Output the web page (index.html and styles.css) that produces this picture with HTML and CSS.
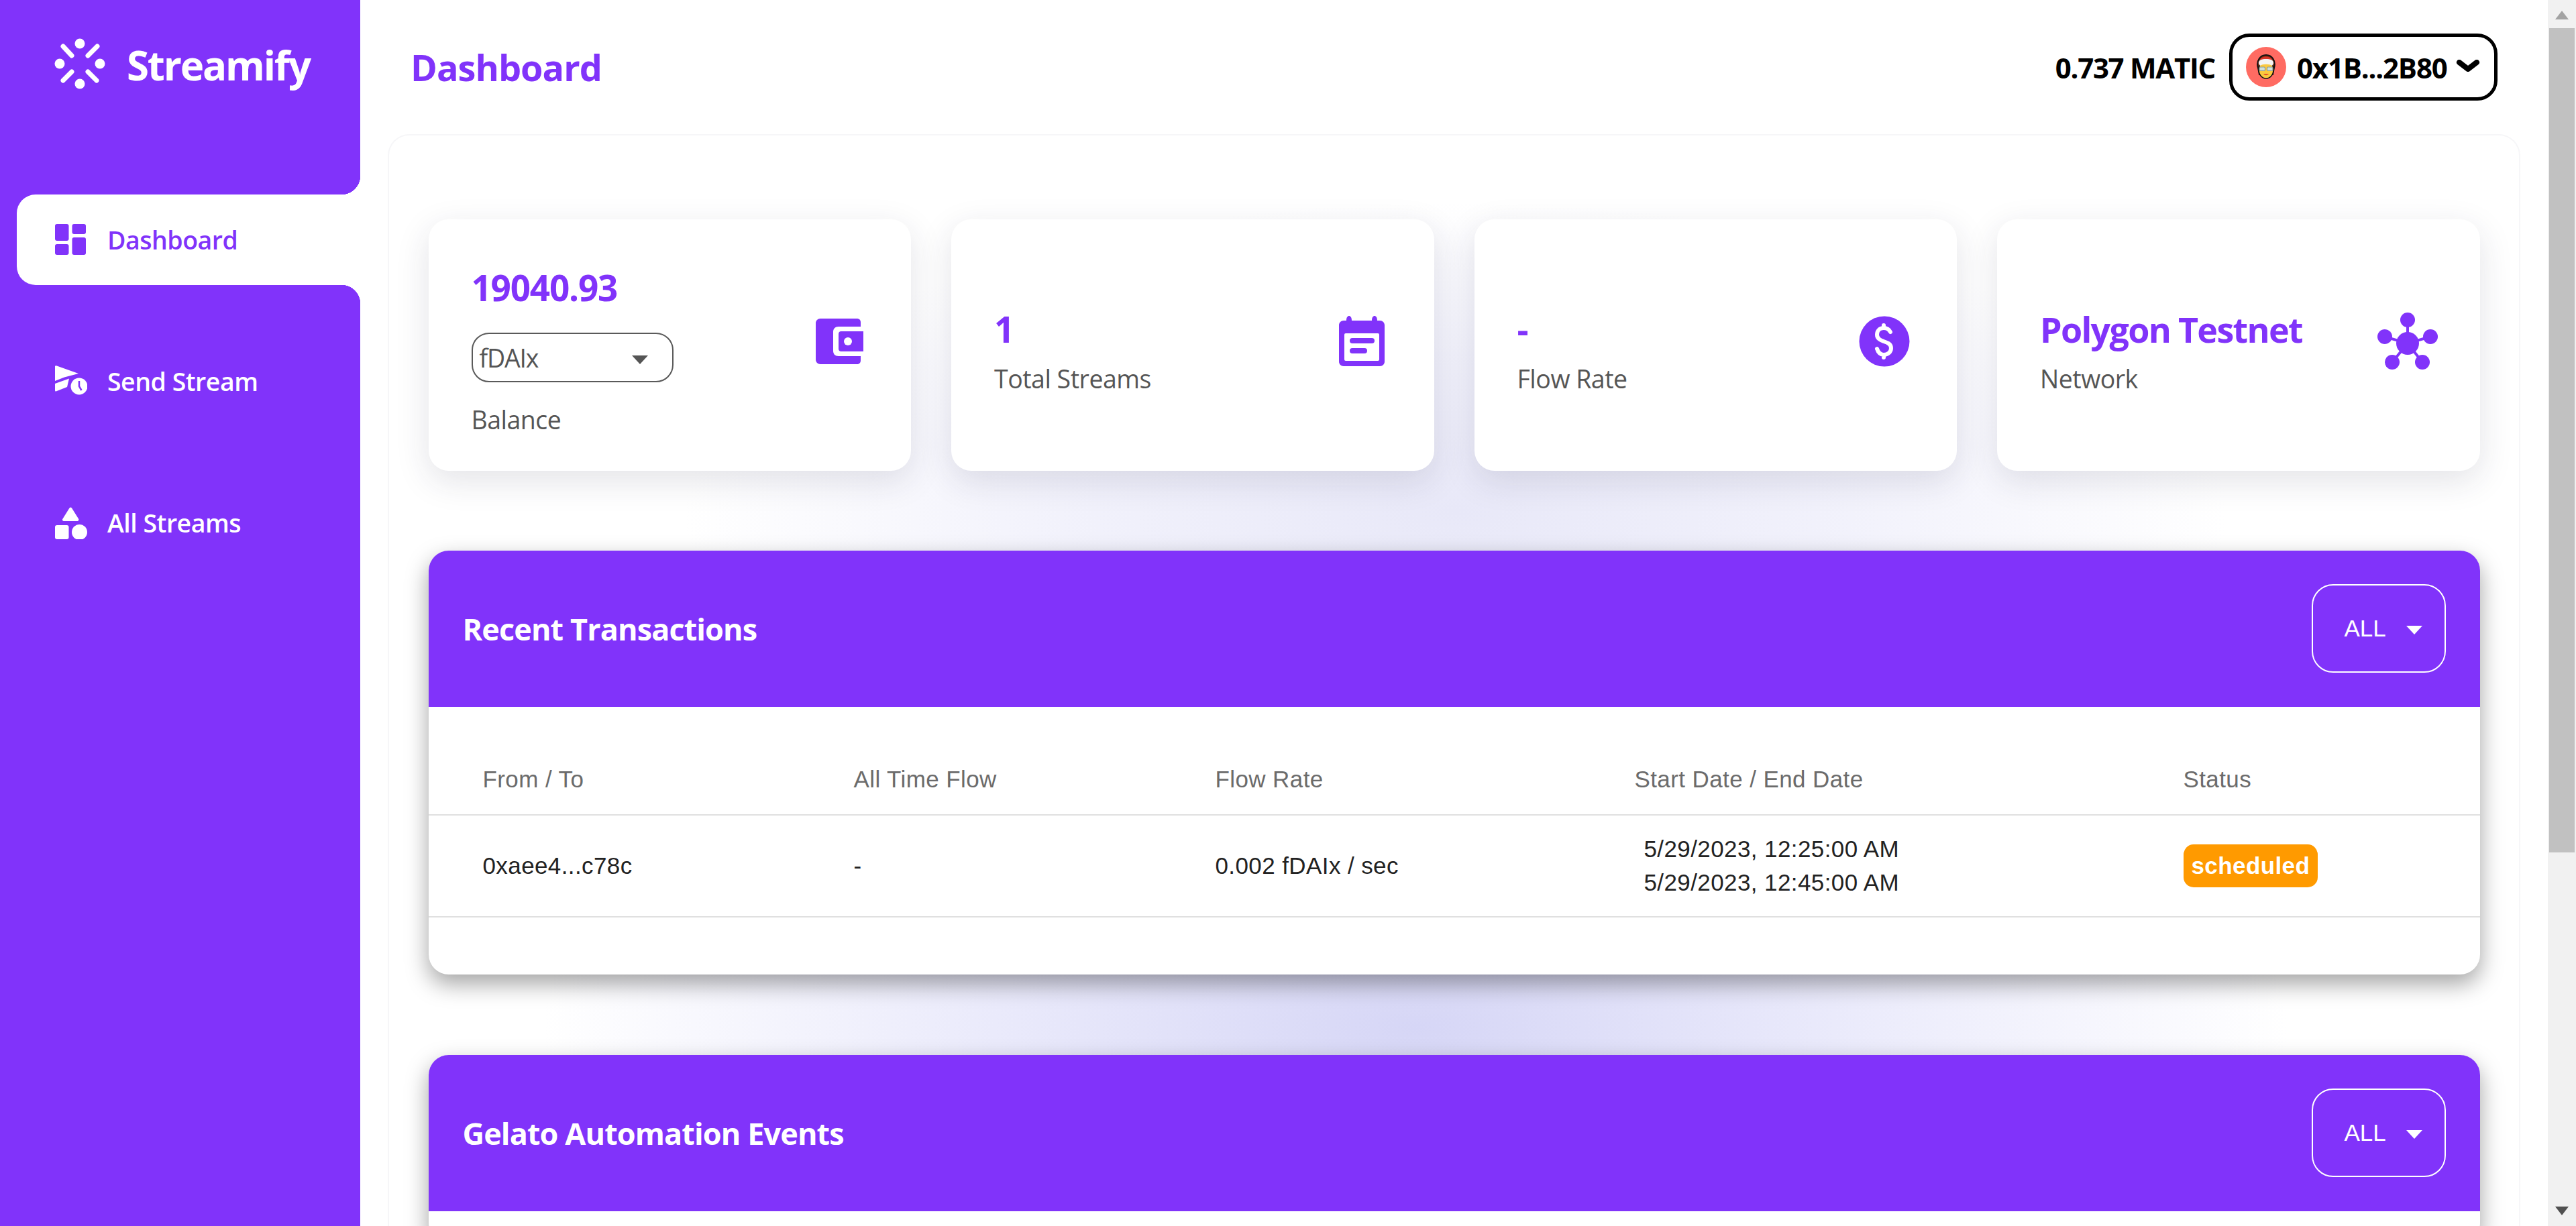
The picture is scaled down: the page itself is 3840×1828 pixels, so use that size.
FILE: index.html
```html
<!doctype html>
<html lang="en">
<head>
    <meta charset="UTF-8">
    <title>Streamify</title>
    <link rel="stylesheet" href="styles.css">
</head>
<body>

<aside class="sidebar">
    <div class="brand">
        <svg class="brand-icon" viewBox="0 0 76 76" fill="#fff" stroke="#fff">
            <circle cx="38" cy="8" r="7.5" stroke="none"/>
            <circle cx="8" cy="38" r="7.5" stroke="none"/>
            <circle cx="68" cy="38" r="7.5" stroke="none"/>
            <circle cx="38" cy="68" r="7.5" stroke="none"/>
            <path d="M13 12 26 26M64 12 50 26M13 63 26 50M63 63 50 50" stroke-width="7" stroke-linecap="round"/>
        </svg>
        <span class="brand-name">Streamify</span>
    </div>

    <nav class="nav">
        <a class="nav-item active">
            <svg class="nav-icon" viewBox="0 0 48 48" fill="currentColor">
                <rect x="0" y="0" width="20.5" height="25" rx="3"/>
                <rect x="25.5" y="0" width="20.5" height="15" rx="3"/>
                <rect x="0" y="30" width="20.5" height="16" rx="3"/>
                <rect x="25.5" y="20" width="20.5" height="26" rx="3"/>
            </svg>
            <span>Dashboard</span>
        </a>
        <a class="nav-item">
            <svg class="nav-icon" viewBox="0 0 48 48" fill="currentColor">
                <path d="M0 1.500C0 .500 1 0 2 .300L35 12 14 17.500 0 23Z"/>
                <path d="M0 27 21 19.500 18 32 1.500 38.500C.500 38.800 0 38 0 37Z"/>
                <circle cx="36" cy="31" r="12.500"/>
                <path d="M36 23 36 31 39.500 37" fill="none" stroke="#8133fa" stroke-width="2.500"/>
            </svg>
            <span>Send Stream</span>
        </a>
        <a class="nav-item">
            <svg class="nav-icon" viewBox="0 0 48 48" fill="currentColor">
                <path d="M21.500 1.500C22.500 0 24 0 25 1.500L35 17.500C36 19 35 21 33.500 21H13C11 21 10.500 19 11.500 17.500Z"/>
                <rect x="0" y="27" width="20.500" height="21" rx="3"/>
                <circle cx="36.500" cy="37.500" r="11.500"/>
            </svg>
            <span>All Streams</span>
        </a>
    </nav>
</aside>

<main class="main">
    <header class="topbar">
        <h1 class="page-title">Dashboard</h1>
        <div class="account">
            <span class="balance">0.737 MATIC</span>
            <div class="wallet-btn">
                <span class="avatar">
                    <svg viewBox="0 0 30 38" width="30" height="38">
                        <path d="M3 20C0 10 6 1 15 1s15 9 12 19l-2 10H5Z" fill="#7a2a12" stroke="#111" stroke-width="2"/>
                        <path d="M6 8C8 2 22 2 24 8Z" fill="#d8352a"/>
                        <ellipse cx="15" cy="23" rx="11" ry="13" fill="#fbc93e" stroke="#111" stroke-width="1.500"/>
                        <path d="M4 14C3 8 9 7 15 7s12 1 11 7L24 17C20 14 10 14 6 17Z" fill="#f4f4f4"/>
                        <rect x="5" y="19" width="8.500" height="5.500" rx="1.500" fill="#cfe0dc" stroke="#8a9a96" stroke-width="1.200"/>
                        <rect x="16.500" y="19" width="8.500" height="5.500" rx="1.500" fill="#cfe0dc" stroke="#8a9a96" stroke-width="1.200"/>
                        <path d="M11 29C13 32 17 32 19 29Z" fill="#e8502a"/>
                    </svg>
                </span>
                <span class="address">0x1B...2B80</span>
                <svg class="chevron" viewBox="0 0 36 18" width="36" height="18">
                    <path d="M5 4 18 14 31 4" fill="none" stroke="#000" stroke-width="8" stroke-linecap="round" stroke-linejoin="round"/>
                </svg>
            </div>
        </div>
    </header>

    <div class="frame">
        <section class="stats">
            <div class="stat-card">
                <div class="stat-text">
                    <div class="stat-value">19040.93</div>
                    <div class="token-select">fDAIx<i class="caret"></i></div>
                    <div class="stat-label">Balance</div>
                </div>
                <svg class="stat-icon" viewBox="0 0 72 68" width="72" height="68">
                    <path d="M7 0H61C65 0 67 2 67 6V12H34C29 12 26 15 26 20V48C26 53 29 56 34 56H67V62C67 66 65 68 61 68H7C3 68 0 65 0 61V7C0 3 3 0 7 0Z" fill="#8133fa"/>
                    <path d="M38 19H71V49H38C35 49 34 47 34 45V23C34 21 35 19 38 19Z" fill="#8133fa"/>
                    <circle cx="48" cy="34" r="6" fill="#fff"/>
                </svg>
            </div>

            <div class="stat-card">
                <div class="stat-text">
                    <div class="stat-value">1</div>
                    <div class="stat-label">Total Streams</div>
                </div>
                <svg class="stat-icon icon-calendar" viewBox="0 0 68 75" width="68" height="75">
                    <path d="M15 0c2 0 4 2 4 7H49c0-5 2-7 4-7s4 2 4 7h4c4 0 7 3 7 7V68c0 4-3 7-7 7H7c-4 0-7-3-7-7V14c0-4 3-7 7-7h4c0-5 2-7 4-7Z" fill="#8133fa"/>
                    <rect x="8" y="26" width="52" height="41" rx="2" fill="#fff"/>
                    <rect x="16" y="33" width="37" height="8" rx="4" fill="#8133fa"/>
                    <rect x="16" y="48" width="26" height="8" rx="4" fill="#8133fa"/>
                </svg>
            </div>

            <div class="stat-card">
                <div class="stat-text">
                    <div class="stat-value">-</div>
                    <div class="stat-label">Flow Rate</div>
                </div>
                <svg class="stat-icon" viewBox="0 0 76 76" width="76" height="76">
                    <circle cx="38" cy="38" r="37.500" fill="#8133fa"/>
                    <path d="M47 24C45 20 41 18 37 18 31 18 27 22 27 28 27 34 32 36 37 38 43 40 48 42 48 48 48 54 43 58 37 58 33 58 29 55 27 49M37 14V18M37 58V62" fill="none" stroke="#fff" stroke-width="6" stroke-linecap="round"/>
                </svg>
            </div>

            <div class="stat-card">
                <div class="stat-text">
                    <div class="stat-value stat-name">Polygon Testnet</div>
                    <div class="stat-label">Network</div>
                </div>
                <svg class="stat-icon icon-network" viewBox="0 0 90 86" width="90" height="86">
                    <path d="M45 46V11M45 46 11 36M45 46 79 36M45 46 22 74M45 46 67 74" stroke="#8133fa" stroke-width="4"/>
                    <circle cx="45" cy="46" r="17" fill="#8133fa"/>
                    <circle cx="45" cy="11" r="11" fill="#8133fa"/>
                    <circle cx="11" cy="36" r="11" fill="#8133fa"/>
                    <circle cx="79" cy="36" r="11" fill="#8133fa"/>
                    <circle cx="22" cy="74" r="11" fill="#8133fa"/>
                    <circle cx="67" cy="74" r="11" fill="#8133fa"/>
                </svg>
            </div>
        </section>

        <section class="table-card">
            <div class="table-head">
                <h2>Recent Transactions</h2>
                <div class="filter">ALL<i class="caret"></i></div>
            </div>
            <table class="streams">
                <thead>
                    <tr>
                        <th>From / To</th>
                        <th>All Time Flow</th>
                        <th>Flow Rate</th>
                        <th>Start Date / End Date</th>
                        <th>Status</th>
                    </tr>
                </thead>
                <tbody>
                    <tr>
                        <td>0xaee4...c78c</td>
                        <td>-</td>
                        <td>0.002 fDAIx / sec</td>
                        <td class="dates">5/29/2023, 12:25:00 AM<br>5/29/2023, 12:45:00 AM</td>
                        <td><span class="badge">scheduled</span></td>
                    </tr>
                </tbody>
            </table>
        </section>

        <section class="table-card table-card-cut">
            <div class="table-head">
                <h2>Gelato Automation Events</h2>
                <div class="filter">ALL<i class="caret"></i></div>
            </div>
        </section>
    </div>
</main>

<div class="scrollbar">
    <i class="arrow-up"></i>
    <div class="thumb"></div>
    <i class="arrow-down"></i>
</div>

</body>
</html>
```

FILE: styles.css
```css
* {
    box-sizing: border-box;
}

body {
    margin: 0;
    display: flex;
    height: 1828px;
    overflow: hidden;
    background: #fff;
    font-family: "Open Sans", sans-serif;
    color: #555;
}

/* sidebar */
.sidebar {
    flex: 0 0 537px;
    background: #8133fa;
    padding-top: 57px;
    color: #fff;
}

.brand {
    display: flex;
    align-items: center;
    height: 76px;
    padding-left: 81px;
    gap: 32px;
}

.brand-icon {
    width: 76px;
    height: 76px;
}

.brand-name {
    font-size: 60px;
    font-weight: 700;
    letter-spacing: -2.200px;
    position: relative;
    top: 2px;
}

.nav {
    display: flex;
    flex-direction: column;
    gap: 76px;
    margin-top: 157px;
    margin-left: 25px;
}

.nav-item {
    position: relative;
    display: flex;
    align-items: center;
    height: 135px;
    padding-left: 57px;
    gap: 30px;
    font-size: 37.500px;
    font-weight: 600;
    letter-spacing: -.5px;
}

.nav-item.active {
    background: #fff;
    color: #8133fa;
    border-radius: 28px 0 0 28px;
}

.nav-item.active::before,
.nav-item.active::after {
    content: "";
    position: absolute;
    right: 0;
    width: 28px;
    height: 28px;
}

.nav-item.active::before {
    bottom: 100%;
    background: radial-gradient(circle at 0 0, #8133fa 28px, #fff 28.500px);
}

.nav-item.active::after {
    top: 100%;
    background: radial-gradient(circle at 0 100%, #8133fa 28px, #fff 28.500px);
}

.nav-icon {
    width: 48px;
    height: 48px;
    flex-shrink: 0;
}

/* main */
.main {
    flex: 1;
    min-width: 0;
    height: 1828px;
    padding: 0 41px;
    overflow: hidden;
}

.topbar {
    display: flex;
    align-items: center;
    justify-content: space-between;
    height: 200px;
    padding: 0 34px;
}

.page-title {
    margin: 0;
    font-size: 54px;
    font-weight: 700;
    color: #8133fa;
    letter-spacing: -1px;
}

.account {
    display: flex;
    align-items: center;
    gap: 21px;
}

.balance {
    font-size: 42px;
    font-weight: 700;
    color: #000;
    letter-spacing: -1.300px;
}

.wallet-btn {
    display: flex;
    align-items: center;
    width: 400px;
    height: 100px;
    padding-left: 20px;
    border: 5px solid #000;
    border-radius: 30px;
    color: #000;
    font-size: 42px;
    font-weight: 700;
    letter-spacing: -1.200px;
}

.avatar {
    display: flex;
    align-items: center;
    justify-content: center;
    width: 60px;
    height: 60px;
    border-radius: 50%;
    background: #ff6b62;
}

.address {
    margin-left: 16px;
}

.chevron {
    margin-left: 13px;
    margin-top: -4px;
}

/* dashboard frame, the purple glow sits in its background */
.frame {
    height: 1628px;
    padding: 124.500px 58.500px 0;
    border: 2.500px solid #f6f6f8;
    border-bottom: 0;
    border-radius: 32px 32px 0 0;
    background:
        radial-gradient(ellipse 1300px 560px at 1530px 1330px, #d6d6f6 0%, rgba(228, 228, 250, .75) 50%, rgba(255, 255, 255, 0) 100%),
        radial-gradient(ellipse 1150px 460px at 1590px 560px, #e8e8f8 0%, rgba(236, 236, 250, .7) 50%, rgba(255, 255, 255, 0) 100%);
}

.stats {
    display: grid;
    grid-template-columns: repeat(4, 1fr);
    gap: 60px;
}

.stat-card {
    display: flex;
    align-items: center;
    justify-content: space-between;
    height: 375px;
    padding: 0 70px 0 64px;
    background: #fff;
    border-radius: 30px;
    box-shadow: 0 15px 50px rgba(40, 40, 70, .13);
}

.stat-value {
    font-size: 53px;
    line-height: 72px;
    font-weight: 700;
    color: #8133fa;
    letter-spacing: -1.200px;
}

.stat-name {
    font-size: 52px;
    letter-spacing: -1.700px;
}

.stat-label {
    font-size: 37.500px;
    line-height: 50px;
    color: #555;
    letter-spacing: -.5px;
    margin-top: 13px;
}

.stat-text {
    padding-top: 16px;
}

.stat-icon {
    flex-shrink: 0;
    margin-top: -11px;
}

.icon-calendar {
    margin-right: 4px;
}

.icon-network {
    margin-right: -7px;
}

.token-select {
    display: flex;
    align-items: center;
    justify-content: space-between;
    width: 301px;
    height: 74px;
    margin-top: 31px;
    padding: 0 36px 0 10px;
    border: 2.500px solid #5a5a5a;
    border-radius: 26px;
    font-size: 37.500px;
    letter-spacing: -1.200px;
    color: #555;
}

.token-select + .stat-label {
    margin-top: 31px;
}

.caret {
    width: 0;
    height: 0;
    border-left: 12.500px solid transparent;
    border-right: 12.500px solid transparent;
    border-top: 13px solid currentColor;
    margin-top: 6px;
}

.table-card {
    margin-top: 119px;
    background: #fff;
    border-radius: 30px;
    box-shadow: 0 14px 34px rgba(0, 0, 0, .36);
    min-height: 632px;
    overflow: hidden;
}

.table-card-cut {
    min-height: 0;
    margin-top: 120px;
    height: 280px;
}

.table-head {
    display: flex;
    align-items: center;
    justify-content: space-between;
    height: 233px;
    padding: 0 51px;
    background: #8133fa;
    color: #fff;
}

.table-head h2 {
    margin: 0;
    font-size: 45px;
    font-weight: 700;
    letter-spacing: -.9px;
}

.filter {
    display: flex;
    align-items: center;
    justify-content: space-between;
    width: 200px;
    height: 132px;
    padding: 0 33px 0 47px;
    border: 2.500px solid #fff;
    border-radius: 32px;
    font-family: "Liberation Sans", Arial, sans-serif;
    font-size: 35px;
}

.filter .caret {
    margin-top: 4px;
}

.streams {
    width: 100%;
    border-collapse: collapse;
    table-layout: fixed;
    font-family: "Liberation Sans", Arial, sans-serif;
    font-size: 35px;
    line-height: 50px;
    letter-spacing: .4px;
}

.streams th,
.streams td {
    padding: 0;
    text-align: left;
    border-bottom: 2.500px solid #e0e0e0;
}

.streams th {
    height: 161px;
    padding-bottom: 27px;
    vertical-align: bottom;
    font-weight: 400;
    color: #6b6b6b;
}

.streams td {
    height: 152px;
    color: #222;
}

.streams th:nth-child(1),
.streams td:nth-child(1) {
    width: 634px;
    padding-left: 81px;
}

.streams th:nth-child(2) {
    width: 539px;
}

.streams th:nth-child(3) {
    width: 625px;
}

.streams th:nth-child(4) {
    width: 818px;
}

.streams .dates {
    padding-left: 14px;
}

.badge {
    display: inline-block;
    padding: 7px 12px;
    border-radius: 15px;
    background: #ff9a00;
    color: #fff;
    font-weight: 700;
}

/* scrollbar */
.scrollbar {
    flex: 0 0 42px;
    display: flex;
    flex-direction: column;
    align-items: center;
    background: #f1f1f1;
}

.thumb {
    width: 38px;
    height: 1229px;
    background: #c1c1c1;
    margin-top: 13px;
}

.arrow-up {
    width: 0;
    height: 0;
    margin-top: 16px;
    border-left: 10px solid transparent;
    border-right: 10px solid transparent;
    border-bottom: 13px solid #a3a3a3;
}

.arrow-down {
    width: 0;
    height: 0;
    margin-top: auto;
    margin-bottom: 16px;
    border-left: 10px solid transparent;
    border-right: 10px solid transparent;
    border-top: 13px solid #505050;
}
```
